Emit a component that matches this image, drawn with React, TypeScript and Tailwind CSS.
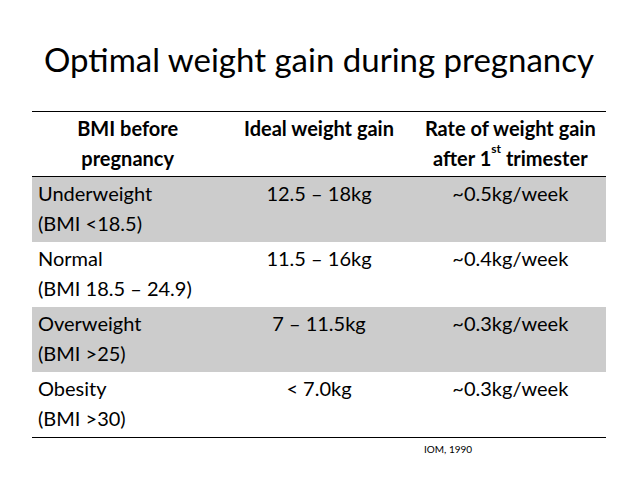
const rows = [
  { bmi: ["Underweight", "(BMI <18.5)"], gain: "12.5 – 18kg", rate: "~0.5kg/week", shaded: true },
  { bmi: ["Normal", "(BMI 18.5 – 24.9)"], gain: "11.5 – 16kg", rate: "~0.4kg/week", shaded: false },
  { bmi: ["Overweight", "(BMI >25)"], gain: "7 – 11.5kg", rate: "~0.3kg/week", shaded: true },
  { bmi: ["Obesity", "(BMI >30)"], gain: "< 7.0kg", rate: "~0.3kg/week", shaded: false },
];

export default function App() {
  return (
    <div
      className="w-[638px] h-[479px] bg-white text-black"
      style={{ fontFamily: "Lato, 'Open Sans', sans-serif" }}
    >
      <div className="h-[111px] pt-[37px]">
        <h1 className="text-center text-[33px] leading-[44px] font-normal">
          Optimal weight gain during pregnancy
        </h1>
      </div>

      <div className="ml-[32px] w-[574px] border-y border-black">
        {/* header */}
        <div className="grid grid-cols-3 h-[65px] border-b border-black pt-[1px] text-[20px] leading-[30px] font-bold text-center">
          <div>
            <div>BMI before</div>
            <div>pregnancy</div>
          </div>
          <div>Ideal weight gain</div>
          <div>
            <div>Rate of weight gain</div>
            <div>
              after 1<sup className="text-[12px] align-[7px]">st</sup> trimester
            </div>
          </div>
        </div>

        {rows.map((r) => (
          <div
            key={r.bmi[0]}
            className={`grid grid-cols-3 h-[65px] pt-[1px] text-[20px] leading-[30px] ${
              r.shaded ? "bg-[#cccccc]" : "bg-white"
            }`}
          >
            <div className="pl-[6px]">
              <div>{r.bmi[0]}</div>
              <div>{r.bmi[1]}</div>
            </div>
            <div className="text-center">{r.gain}</div>
            <div className="text-center">{r.rate}</div>
          </div>
        ))}
      </div>

      <div className="pl-[424px] pt-[3px] text-[10px] leading-[16px]">IOM, 1990</div>
    </div>
  );
}
